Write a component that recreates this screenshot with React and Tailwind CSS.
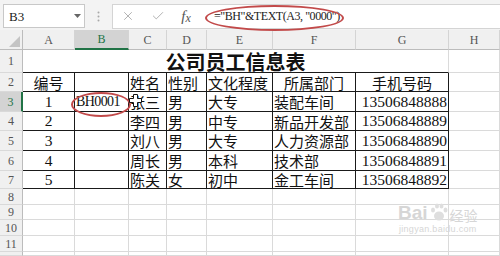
import React from "react";
import { X, Check } from "lucide-react";

const COLS = ["A", "B", "C", "D", "E", "F", "G", "H"];

const DATA = [
  ["编号", "", "姓名", "性别", "文化程度", "所属部门", "手机号码"],
  ["1", "BH0001", "张三", "男", "大专", "装配车间", "13506848888"],
  ["2", "", "李四", "男", "中专", "新品开发部", "13506848889"],
  ["3", "", "刘八", "男", "大专", "人力资源部", "13506848890"],
  ["4", "", "周长", "男", "本科", "技术部", "13506848891"],
  ["5", "", "陈关", "女", "初中", "金工车间", "13506848892"],
];

const HEAD_ALIGN = ["justify-center", "justify-start", "justify-start", "justify-start", "justify-start", "justify-center", "justify-center"];
const DATA_ALIGN = ["justify-center", "justify-start", "justify-start", "justify-start", "justify-start", "justify-start", "justify-end"];

function RowHeader({ n, sel }) {
  return (
    <div
      className={
        "flex items-center justify-center text-[12px] leading-none border-b border-[#d9d9d9] " +
        (sel
          ? "bg-[#d3d3d3] text-[#217346] border-r-2 border-r-[#217346]"
          : "bg-[#f0f0f0] text-[#555] border-r border-r-[#bcbcbc]")
      }
    >
      {n}
    </div>
  );
}

function GridCell() {
  return <div className="border-r border-b border-[#dadada]" />;
}

export default function App() {
  const cells = [];
  cells.push(
    <div key="corner" className="bg-[#f0f0f0] border-r border-b border-[#bcbcbc] relative">
      <svg className="absolute right-[2px] bottom-[2px]" width="11" height="11" viewBox="0 0 11 11">
        <polygon points="11,0 11,11 0,11" fill="#c4c4c4" />
      </svg>
    </div>
  );
  COLS.forEach((c) => {
    const sel = c === "B";
    cells.push(
      <div
        key={"h" + c}
        className={
          "flex items-center justify-center text-[12px] leading-none border-r border-[#d4d4d4] " +
          (sel
            ? "bg-[#d3d3d3] text-[#217346] border-b-2 border-b-[#217346]"
            : "bg-[#f0f0f0] text-[#555] border-b border-b-[#bcbcbc]")
        }
      >
        {c}
      </div>
    );
  });

  cells.push(<RowHeader key="r1" n={1} />);
  cells.push(
    <div
      key="title"
      className="col-span-7 border-b border-b-[#1a1a1a] border-r border-r-[#dadada] flex items-center justify-center pt-[1px] text-[20px] leading-none font-bold text-[#111] font-['Noto_Sans_CJK_SC',sans-serif]"
    >
      公司员工信息表
    </div>
  );
  cells.push(<GridCell key="r1h" />);

  DATA.forEach((row, ri) => {
    const r = ri + 2;
    cells.push(<RowHeader key={"r" + r} n={r} sel={r === 3} />);
    row.forEach((v, ci) => {
      const align = ri === 0 ? HEAD_ALIGN[ci] : DATA_ALIGN[ci];
      const isNum = /^[0-9A-Z]+$/.test(v);
      const font = isNum
        ? ci === 1
          ? "font-['Liberation_Serif',serif] text-[14px] tracking-[-0.6px]"
          : "font-['Liberation_Serif',serif] text-[15.5px]"
        : "font-['Noto_Sans_CJK_SC',sans-serif] text-[15px]";
      cells.push(
        <div
          key={"c" + r + ci}
          className={
            "flex items-center whitespace-nowrap leading-none border-r border-b border-[#1a1a1a] text-[#111] px-[1px] " +
            align +
            " " +
            font
          }
        >
          {v}
        </div>
      );
    });
    cells.push(<GridCell key={"r" + r + "h"} />);
  });

  for (let r = 8; r <= 12; r++) {
    cells.push(<RowHeader key={"r" + r} n={r === 12 ? "" : r} />);
    for (let c = 0; c < 8; c++) cells.push(<GridCell key={"g" + r + c} />);
  }

  return (
    <div className="w-[500px] h-[256px] overflow-hidden bg-white relative font-['Liberation_Serif','Noto_Sans_CJK_SC',serif]">
      <div className="h-[30px] bg-[#f3f3f3] flex items-center pl-[3px] pt-[2px]">
        <div className="w-[82px] h-[24px] bg-white border border-[#c8c8c8] flex items-center justify-between pl-[5px] pr-[3px]">
          <span className="text-[13px] text-[#222] leading-none">B3</span>
          <svg width="7" height="4" viewBox="0 0 7 4">
            <polygon points="0,0 7,0 3.5,4" fill="#666" />
          </svg>
        </div>
        <div className="w-[27px] flex justify-center">
          <svg width="3" height="11" viewBox="0 0 3 11">
            <circle cx="1.5" cy="1.5" r="1" fill="#a8a8a8" />
            <circle cx="1.5" cy="5.5" r="1" fill="#a8a8a8" />
            <circle cx="1.5" cy="9.5" r="1" fill="#a8a8a8" />
          </svg>
        </div>
        <div className="flex-1 h-[25px] bg-white border-l border-y border-[#d4d4d4] flex items-center">
          <div className="w-[30px] flex justify-center">
            <X size={14} strokeWidth={1.3} color="#9a9a9a" />
          </div>
          <div className="w-[30px] flex justify-center">
            <Check size={14} strokeWidth={1.3} color="#9a9a9a" />
          </div>
          <div className="w-[26px] flex justify-center italic text-[15px] text-[#555] leading-none font-['Liberation_Serif',serif]">
            <span>f</span>
            <span className="text-[12px] mt-[3px]">x</span>
          </div>
          <div className="pl-[15px] text-[12px] tracking-[-0.45px] text-[#222] leading-none whitespace-nowrap">
            ="BH"&amp;TEXT(A3, "0000")
          </div>
        </div>
      </div>

      <div className="grid grid-cols-[23px_52px_54px_38px_40px_66px_83px_93px_51px] grid-rows-[20px_23px_19px_20px_19px_20px_20px_18px_16px_15px_16px_16px_4px]">
        {cells}
      </div>

      <div className="absolute left-[205px] top-[5px] w-[139px] h-[26px] rounded-[50%] border-2 border-[#c24a4a]" />
      <div className="absolute left-[71px] top-[92px] w-[60px] h-[25px] rounded-[50%] border-2 border-[#c24a4a]" />

      <svg className="absolute left-[129px] top-[94px]" width="13" height="13" viewBox="0 0 13 13">
        <path
          d="M4.5 0.5 H8.5 V4.5 H12.5 V8.5 H8.5 V12.5 H4.5 V8.5 H0.5 V4.5 H4.5 Z"
          fill="#fff"
          stroke="#111"
          strokeWidth="1"
        />
      </svg>

      <div className="absolute left-[398px] top-[202px] flex flex-col items-center text-[#d6d6d6] font-['Liberation_Sans',sans-serif]">
        <div className="flex items-end leading-none">
          <span className="text-[19px] font-bold">Bai</span>
          <svg width="20" height="20" viewBox="0 0 20 20" className="mx-[1px]">
            <ellipse cx="10" cy="14" rx="5" ry="4.5" fill="#dedede" />
            <ellipse cx="4" cy="8" rx="2" ry="2.6" fill="#dedede" />
            <ellipse cx="8" cy="4" rx="2" ry="2.6" fill="#dedede" />
            <ellipse cx="12.5" cy="4" rx="2" ry="2.6" fill="#dedede" />
            <ellipse cx="16.5" cy="8" rx="2" ry="2.6" fill="#dedede" />
          </svg>
          <span className="text-[14px] font-['Noto_Sans_CJK_SC',sans-serif]">经验</span>
        </div>
        <span className="text-[9px] leading-none mt-[3px] tracking-[0.3px]">jingyan.baidu.com</span>
      </div>
    </div>
  );
}
